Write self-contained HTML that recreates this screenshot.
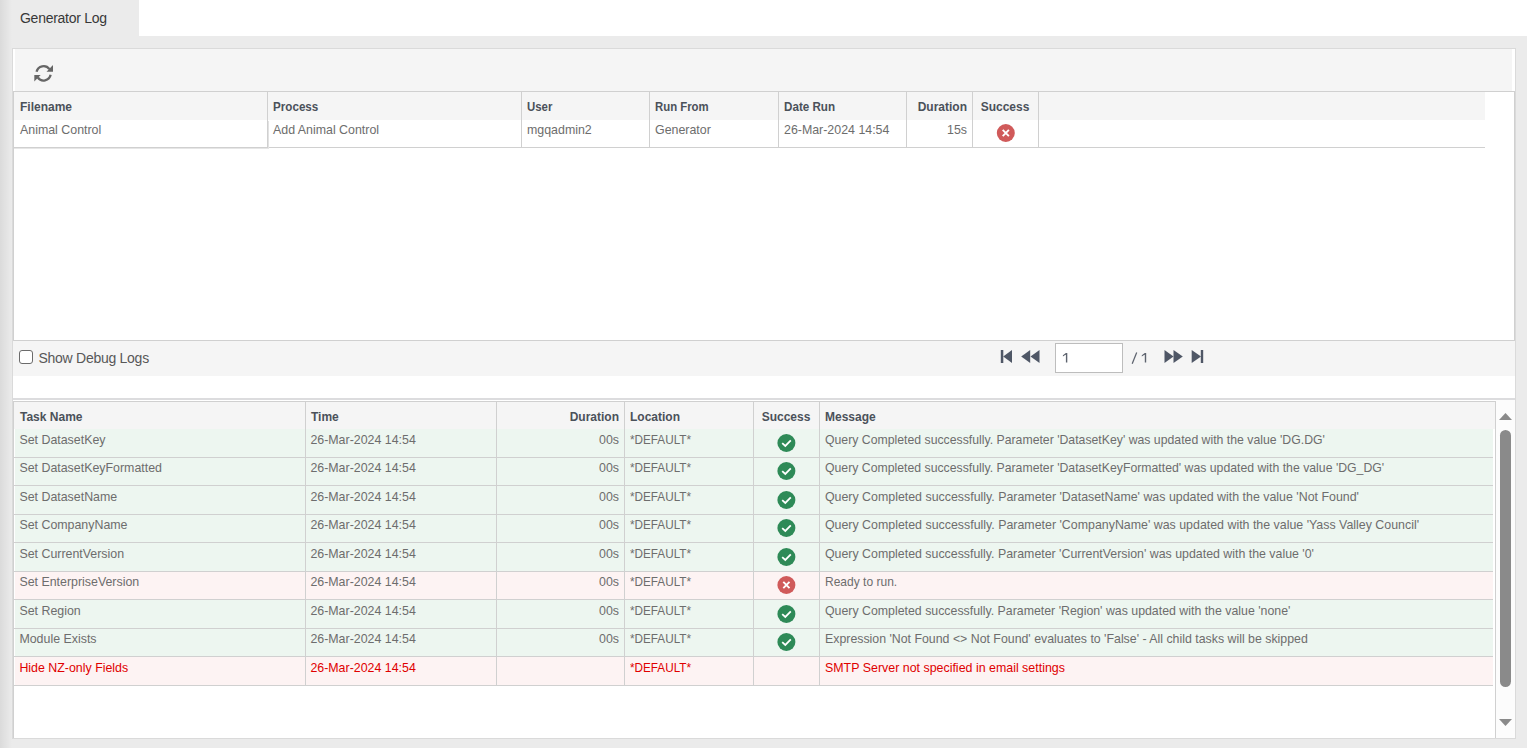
<!DOCTYPE html>
<html><head><meta charset="utf-8"><style>
html,body{margin:0;padding:0;}
body{width:1528px;height:748px;position:relative;overflow:hidden;background:#fff;font-family:"Liberation Sans", sans-serif;}
.a{position:absolute;}
.t{position:absolute;white-space:nowrap;font-size:12.4px;color:#6d6d6d;line-height:16px;}
.h{position:absolute;white-space:nowrap;font-size:12px;color:#4b515a;font-weight:bold;line-height:16px;}
.r{text-align:right;}
.c{text-align:center;}
</style></head><body>

<div class="a" style="left:0;top:0;width:139px;height:36px;background:#ebebeb"></div>
<div class="a" style="left:0;top:36px;width:1527px;height:712px;background:#ebebeb"></div>
<div class="a" style="left:0;top:0;width:12px;height:748px;background:linear-gradient(to right,rgba(0,0,0,0.07),rgba(0,0,0,0))"></div>
<div class="t" style="left:20px;top:10px;font-size:14px;letter-spacing:-0.27px;color:#383838">Generator Log</div>
<div class="a" style="left:12px;top:48px;width:1502px;height:689px;border:1px solid #dadada;background:#fff"></div>
<div class="a" style="left:15px;top:49px;width:1497px;height:42px;background:#f5f5f5"></div>
<div class="a" style="left:13px;top:91px;width:1502px;height:1px;background:#d0d0d0"></div>
<div class="a" style="left:13px;top:91px;width:1px;height:249px;background:#d0d0d0"></div>
<div class="a" style="left:1514px;top:91px;width:1px;height:249px;background:#d0d0d0"></div>
<div class="a" style="left:14px;top:92px;width:1471px;height:28px;background:#f5f5f5"></div>
<div class="a" style="left:14px;top:147px;width:1471px;height:1px;background:#d0d0d0"></div>
<div class="a" style="left:267px;top:92px;width:1px;height:55px;background:#d0d0d0"></div>
<div class="a" style="left:521px;top:92px;width:1px;height:55px;background:#d0d0d0"></div>
<div class="a" style="left:649px;top:92px;width:1px;height:55px;background:#d0d0d0"></div>
<div class="a" style="left:778px;top:92px;width:1px;height:55px;background:#d0d0d0"></div>
<div class="a" style="left:906px;top:92px;width:1px;height:55px;background:#d0d0d0"></div>
<div class="a" style="left:972px;top:92px;width:1px;height:55px;background:#d0d0d0"></div>
<div class="a" style="left:1038px;top:92px;width:1px;height:55px;background:#d0d0d0"></div>
<div class="h" style="left:20px;top:99px;transform:scaleX(1);transform-origin:0 0">Filename</div>
<div class="t" style="left:20px;top:122px">Animal Control</div>
<div class="h" style="left:273px;top:99px;transform:scaleX(0.97);transform-origin:0 0">Process</div>
<div class="t" style="left:273px;top:122px">Add Animal Control</div>
<div class="h" style="left:527px;top:99px;transform:scaleX(0.95);transform-origin:0 0">User</div>
<div class="t" style="left:527px;top:122px">mgqadmin2</div>
<div class="h" style="left:655px;top:99px;transform:scaleX(0.947);transform-origin:0 0">Run From</div>
<div class="t" style="left:655px;top:122px">Generator</div>
<div class="h" style="left:784px;top:99px;transform:scaleX(0.97);transform-origin:0 0">Date Run</div>
<div class="t" style="left:784px;top:122px">26-Mar-2024 14:54</div>
<div class="h r" style="left:906px;width:61px;top:99px">Duration</div>
<div class="t r" style="left:906px;width:61px;top:122px">15s</div>
<div class="h c" style="left:972px;width:66px;top:99px">Success</div>
<div class="a" style="left:268px;top:121px;width:1px;height:27px;background:#e2e2e2"></div>
<div class="a" style="left:14px;top:148px;width:255px;height:1px;background:#e6e6e6"></div>
<div class="a" style="left:13px;top:340px;width:1502px;height:1px;background:#d0d0d0"></div>
<div class="a" style="left:13px;top:341px;width:1502px;height:35px;background:#f5f5f5"></div>
<div class="a" style="left:19px;top:349.8px;width:12.4px;height:12.4px;border:1.5px solid #6b6b6b;border-radius:3px;background:#fff"></div>
<div class="t" style="left:38.5px;top:350px;font-size:14px;letter-spacing:-0.27px;color:#585858">Show Debug Logs</div>
<div class="a" style="left:1055px;top:343px;width:66px;height:28px;border:1px solid #bdbdbd;background:#fff"></div>
<div class="a" style="left:13px;top:398px;width:1502px;height:2px;background:#dcdcde"></div>
<div class="a" style="left:13px;top:401px;width:1483px;height:337px;border-top:1px solid #d0d0d0;border-left:1px solid #d0d0d0;border-right:1px solid #d0d0d0;box-sizing:border-box"></div>
<div class="a" style="left:1496px;top:400px;width:19px;height:338px;background:#fcfcfc"></div>
<div class="a" style="left:1495px;top:401px;width:1px;height:337px;background:#d0d0d0"></div>
<div class="a" style="left:1500px;top:430px;width:11px;height:257px;background:#8a8a8a;border-radius:5.5px"></div>
<div class="a" style="left:14px;top:402px;width:1481px;height:27px;background:#f5f5f5"></div>
<div class="a" style="left:15px;top:429px;width:1478px;height:28px;background:#edf6f0"></div>
<div class="a" style="left:14px;top:457px;width:1479px;height:1px;background:#d0d0d0"></div>
<div class="t" style="left:19.4px;top:432px;color:#6d6d6d">Set DatasetKey</div>
<div class="t" style="left:310.4px;top:432px;color:#6d6d6d">26-Mar-2024 14:54</div>
<div class="t r" style="left:496px;width:123px;top:432px;color:#6d6d6d">00s</div>
<div class="t" style="left:629.6px;top:432px;color:#6d6d6d;transform:scaleX(0.946);transform-origin:0 0">*DEFAULT*</div>
<div class="t" style="left:824.9px;top:432px;color:#6d6d6d;transform:scaleX(0.9897);transform-origin:0 0">Query Completed successfully. Parameter 'DatasetKey' was updated with the value 'DG.DG'</div>
<div class="a" style="left:15px;top:458px;width:1478px;height:27px;background:#edf6f0"></div>
<div class="a" style="left:14px;top:485px;width:1479px;height:1px;background:#d0d0d0"></div>
<div class="t" style="left:19.4px;top:460px;color:#6d6d6d">Set DatasetKeyFormatted</div>
<div class="t" style="left:310.4px;top:460px;color:#6d6d6d">26-Mar-2024 14:54</div>
<div class="t r" style="left:496px;width:123px;top:460px;color:#6d6d6d">00s</div>
<div class="t" style="left:629.6px;top:460px;color:#6d6d6d;transform:scaleX(0.946);transform-origin:0 0">*DEFAULT*</div>
<div class="t" style="left:824.9px;top:460px;color:#6d6d6d;transform:scaleX(0.9897);transform-origin:0 0">Query Completed successfully. Parameter 'DatasetKeyFormatted' was updated with the value 'DG_DG'</div>
<div class="a" style="left:15px;top:486px;width:1478px;height:28px;background:#edf6f0"></div>
<div class="a" style="left:14px;top:514px;width:1479px;height:1px;background:#d0d0d0"></div>
<div class="t" style="left:19.4px;top:489px;color:#6d6d6d">Set DatasetName</div>
<div class="t" style="left:310.4px;top:489px;color:#6d6d6d">26-Mar-2024 14:54</div>
<div class="t r" style="left:496px;width:123px;top:489px;color:#6d6d6d">00s</div>
<div class="t" style="left:629.6px;top:489px;color:#6d6d6d;transform:scaleX(0.946);transform-origin:0 0">*DEFAULT*</div>
<div class="t" style="left:824.9px;top:489px;color:#6d6d6d;transform:scaleX(1);transform-origin:0 0">Query Completed successfully. Parameter 'DatasetName' was updated with the value 'Not Found'</div>
<div class="a" style="left:15px;top:515px;width:1478px;height:27px;background:#edf6f0"></div>
<div class="a" style="left:14px;top:542px;width:1479px;height:1px;background:#d0d0d0"></div>
<div class="t" style="left:19.4px;top:517px;color:#6d6d6d">Set CompanyName</div>
<div class="t" style="left:310.4px;top:517px;color:#6d6d6d">26-Mar-2024 14:54</div>
<div class="t r" style="left:496px;width:123px;top:517px;color:#6d6d6d">00s</div>
<div class="t" style="left:629.6px;top:517px;color:#6d6d6d;transform:scaleX(0.946);transform-origin:0 0">*DEFAULT*</div>
<div class="t" style="left:824.9px;top:517px;color:#6d6d6d;transform:scaleX(1);transform-origin:0 0">Query Completed successfully. Parameter 'CompanyName' was updated with the value 'Yass Valley Council'</div>
<div class="a" style="left:15px;top:543px;width:1478px;height:28px;background:#edf6f0"></div>
<div class="a" style="left:14px;top:571px;width:1479px;height:1px;background:#d0d0d0"></div>
<div class="t" style="left:19.4px;top:546px;color:#6d6d6d">Set CurrentVersion</div>
<div class="t" style="left:310.4px;top:546px;color:#6d6d6d">26-Mar-2024 14:54</div>
<div class="t r" style="left:496px;width:123px;top:546px;color:#6d6d6d">00s</div>
<div class="t" style="left:629.6px;top:546px;color:#6d6d6d;transform:scaleX(0.946);transform-origin:0 0">*DEFAULT*</div>
<div class="t" style="left:824.9px;top:546px;color:#6d6d6d;transform:scaleX(0.998);transform-origin:0 0">Query Completed successfully. Parameter 'CurrentVersion' was updated with the value '0'</div>
<div class="a" style="left:15px;top:572px;width:1478px;height:27px;background:#fdf3f3"></div>
<div class="a" style="left:14px;top:599px;width:1479px;height:1px;background:#d0d0d0"></div>
<div class="t" style="left:19.4px;top:574px;color:#6d6d6d">Set EnterpriseVersion</div>
<div class="t" style="left:310.4px;top:574px;color:#6d6d6d">26-Mar-2024 14:54</div>
<div class="t r" style="left:496px;width:123px;top:574px;color:#6d6d6d">00s</div>
<div class="t" style="left:629.6px;top:574px;color:#6d6d6d;transform:scaleX(0.946);transform-origin:0 0">*DEFAULT*</div>
<div class="t" style="left:824.9px;top:574px;color:#6d6d6d;transform:scaleX(0.97);transform-origin:0 0">Ready to run.</div>
<div class="a" style="left:15px;top:600px;width:1478px;height:28px;background:#edf6f0"></div>
<div class="a" style="left:14px;top:628px;width:1479px;height:1px;background:#d0d0d0"></div>
<div class="t" style="left:19.4px;top:603px;color:#6d6d6d">Set Region</div>
<div class="t" style="left:310.4px;top:603px;color:#6d6d6d">26-Mar-2024 14:54</div>
<div class="t r" style="left:496px;width:123px;top:603px;color:#6d6d6d">00s</div>
<div class="t" style="left:629.6px;top:603px;color:#6d6d6d;transform:scaleX(0.946);transform-origin:0 0">*DEFAULT*</div>
<div class="t" style="left:824.9px;top:603px;color:#6d6d6d;transform:scaleX(0.996);transform-origin:0 0">Query Completed successfully. Parameter 'Region' was updated with the value 'none'</div>
<div class="a" style="left:15px;top:629px;width:1478px;height:27px;background:#edf6f0"></div>
<div class="a" style="left:14px;top:656px;width:1479px;height:1px;background:#d0d0d0"></div>
<div class="t" style="left:19.4px;top:631px;color:#6d6d6d">Module Exists</div>
<div class="t" style="left:310.4px;top:631px;color:#6d6d6d">26-Mar-2024 14:54</div>
<div class="t r" style="left:496px;width:123px;top:631px;color:#6d6d6d">00s</div>
<div class="t" style="left:629.6px;top:631px;color:#6d6d6d;transform:scaleX(0.946);transform-origin:0 0">*DEFAULT*</div>
<div class="t" style="left:824.9px;top:631px;color:#6d6d6d;transform:scaleX(0.996);transform-origin:0 0">Expression 'Not Found &lt;&gt; Not Found' evaluates to 'False' - All child tasks will be skipped</div>
<div class="a" style="left:15px;top:657px;width:1478px;height:28px;background:#fdf3f3"></div>
<div class="a" style="left:14px;top:685px;width:1479px;height:1px;background:#d0d0d0"></div>
<div class="t" style="left:19.4px;top:660px;color:#e00000">Hide NZ-only Fields</div>
<div class="t" style="left:310.4px;top:660px;color:#e00000">26-Mar-2024 14:54</div>
<div class="t" style="left:629.6px;top:660px;color:#e00000;transform:scaleX(0.946);transform-origin:0 0">*DEFAULT*</div>
<div class="t" style="left:824.9px;top:660px;color:#e00000;transform:scaleX(1.002);transform-origin:0 0">SMTP Server not specified in email settings</div>
<div class="h" style="left:20px;top:409px">Task Name</div>
<div class="h" style="left:311px;top:409px">Time</div>
<div class="h r" style="left:496px;width:123px;top:409px">Duration</div>
<div class="h" style="left:630px;top:409px">Location</div>
<div class="h c" style="left:753px;width:66px;top:409px">Success</div>
<div class="h" style="left:825px;top:409px">Message</div>
<div class="a" style="left:305px;top:402px;width:1px;height:283px;background:#d0d0d0"></div>
<div class="a" style="left:496px;top:402px;width:1px;height:283px;background:#d0d0d0"></div>
<div class="a" style="left:624px;top:402px;width:1px;height:283px;background:#d0d0d0"></div>
<div class="a" style="left:753px;top:402px;width:1px;height:283px;background:#d0d0d0"></div>
<div class="a" style="left:819px;top:402px;width:1px;height:283px;background:#d0d0d0"></div>
<svg class="a" style="left:0;top:0" width="1528" height="748" viewBox="0 0 1528 748"><g fill="none" stroke="#666" stroke-width="2.3"><path d="M36.56 71.80 A7.2 7.2 0 0 1 49.42 69.07"/><path d="M50.64 74.80 A7.2 7.2 0 0 1 37.78 77.53"/></g><g fill="#666"><path d="M46.5 71.8 L53 71.8 L53 65 Z"/><path d="M40.7 74.9 L34.3 74.9 L34.3 81.6 Z"/></g><circle cx="1005.8" cy="133" r="9" fill="#d05a5a"/><path d="M1002.6999999999999 129.9 L1008.9 136.1 M1008.9 129.9 L1002.6999999999999 136.1" stroke="#fff" stroke-width="1.9"/><circle cx="786.4" cy="443" r="9" fill="#2e8a57"/><path d="M782.1999999999999 443.1 L785.3 445.9 L790.8 440.3" fill="none" stroke="#fff" stroke-width="1.8"/><circle cx="786.4" cy="471" r="9" fill="#2e8a57"/><path d="M782.1999999999999 471.1 L785.3 473.9 L790.8 468.3" fill="none" stroke="#fff" stroke-width="1.8"/><circle cx="786.4" cy="500" r="9" fill="#2e8a57"/><path d="M782.1999999999999 500.1 L785.3 502.9 L790.8 497.3" fill="none" stroke="#fff" stroke-width="1.8"/><circle cx="786.4" cy="528" r="9" fill="#2e8a57"/><path d="M782.1999999999999 528.1 L785.3 530.9 L790.8 525.3" fill="none" stroke="#fff" stroke-width="1.8"/><circle cx="786.4" cy="557" r="9" fill="#2e8a57"/><path d="M782.1999999999999 557.1 L785.3 559.9 L790.8 554.3" fill="none" stroke="#fff" stroke-width="1.8"/><circle cx="786.4" cy="585" r="9" fill="#d05a5a"/><path d="M783.3 581.9 L789.5 588.1 M789.5 581.9 L783.3 588.1" stroke="#fff" stroke-width="1.9"/><circle cx="786.4" cy="614" r="9" fill="#2e8a57"/><path d="M782.1999999999999 614.1 L785.3 616.9 L790.8 611.3" fill="none" stroke="#fff" stroke-width="1.8"/><circle cx="786.4" cy="642" r="9" fill="#2e8a57"/><path d="M782.1999999999999 642.1 L785.3 644.9 L790.8 639.3" fill="none" stroke="#fff" stroke-width="1.8"/><g fill="#4f5766"><rect x="1000.8" y="350" width="2.5" height="13"/><path d="M1012 350 L1003.2 356.5 L1012 363 Z"/><path d="M1030.2 350 L1021.2 356.5 L1030.2 363 Z"/><path d="M1039.5 350 L1030.5 356.5 L1039.5 363 Z"/><path d="M1164.5 350 L1173.5 356.5 L1164.5 363 Z"/><path d="M1173.5 350 L1182.8 356.5 L1173.5 363 Z"/><path d="M1191.7 350 L1201 356.5 L1191.7 363 Z"/><rect x="1200.8" y="350" width="2.4" height="13"/></g><g fill="#5d636e"><path d="M1065.9 353 L1067.3 353 L1067.3 362.6 L1065.9 362.6 Z M1065.9 353 L1062.9 355.2 L1062.9 356.5 L1065.9 354.6 Z"/><path d="M1132.2 363.8 L1136.7 352.6" stroke="#5d636e" stroke-width="1.25" fill="none"/><path d="M1144.8 353 L1146.2 353 L1146.2 362.6 L1144.8 362.6 Z M1144.8 353 L1141.8 355.2 L1141.8 356.5 L1144.8 354.6 Z"/></g><path d="M1499 420 L1505.5 413 L1512 420 Z" fill="#8a8a8a"/><path d="M1499 719 L1505.5 726 L1512 719 Z" fill="#8a8a8a"/></svg>
</body></html>
